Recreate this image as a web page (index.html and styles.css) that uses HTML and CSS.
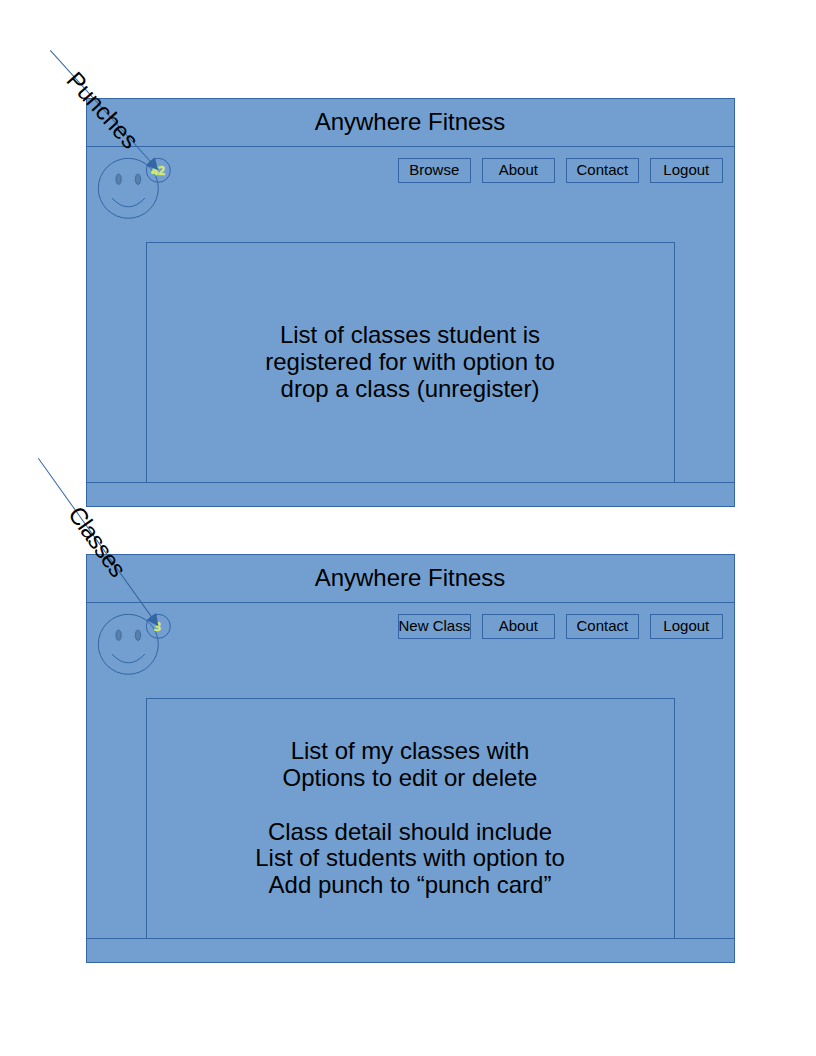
FILE: index.html
```html
<!DOCTYPE html>
<html lang="en">
<head>
<meta charset="utf-8">
<title>Anywhere Fitness</title>
<link rel="stylesheet" href="styles.css">
</head>
<body>
<main class="page">
  <section class="screen">
    <header class="header">Anywhere Fitness</header>
    <div class="body">
      <div class="toolbar">
        <svg class="avatar" width="76" height="64" viewBox="0 0 76 64">
          <circle class="outline" cx="31.3" cy="31.3" r="30"/>
          <ellipse class="eye" cx="21.6" cy="22.2" rx="2.7" ry="5.2"/>
          <ellipse class="eye" cx="41" cy="22.2" rx="2.7" ry="5.2"/>
          <path class="outline" d="M15 41.2Q31.500 58.500 47.800 41.200"/>
          <circle class="outline" cx="61.300" cy="13.300" r="12"/>
          <text class="count" x="61" y="17.700">42</text>
        </svg>
        <nav class="nav">
          <span class="button">Browse</span><span class="button">About</span><span class="button">Contact</span><span class="button">Logout</span>
        </nav>
      </div>
      <div class="panel"><p>List of classes student is<br>registered for with option to<br>drop a class (unregister)</p></div>
    </div>
    <footer class="footer"></footer>
  </section>
  <section class="screen">
    <header class="header">Anywhere Fitness</header>
    <div class="body">
      <div class="toolbar">
        <svg class="avatar" width="76" height="64" viewBox="0 0 76 64">
          <circle class="outline" cx="31.3" cy="31.3" r="30"/>
          <ellipse class="eye" cx="21.6" cy="22.2" rx="2.7" ry="5.2"/>
          <ellipse class="eye" cx="41" cy="22.2" rx="2.7" ry="5.2"/>
          <path class="outline" d="M15 41.2Q31.500 58.500 47.800 41.200"/>
          <circle class="outline" cx="61.300" cy="13.300" r="12"/>
          <text class="count" x="60.500" y="17.700">3</text>
        </svg>
        <nav class="nav">
          <span class="button">New Class</span><span class="button">About</span><span class="button">Contact</span><span class="button">Logout</span>
        </nav>
      </div>
      <div class="panel"><p>List of my classes with<br>Options to edit or delete<br><br>Class detail should include<br>List of students with option to<br>Add punch to “punch card”</p></div>
    </div>
    <footer class="footer"></footer>
  </section>
  <svg class="callouts" width="816" height="1056" viewBox="0 0 816 1056">
    <g transform="translate(50.3 50.3) rotate(48.01)">
      <path class="leader" d="M0 0H152"/>
      <path class="arrowhead" d="M161.400 0L149.400 -6V6Z"/>
      <text class="label" x="79.600" y="9.400">Punches</text>
    </g>
    <g transform="translate(38.3 458.3) rotate(54.46)">
      <path class="leader" d="M0 0H197"/>
      <path class="arrowhead" d="M206.500 0L194.500 -6V6Z"/>
      <text class="label" x="102.200" y="8.700" textLength="80">Classes</text>
    </g>
  </svg>
</main>
</body>
</html>
```
FILE: styles.css
```css
* { box-sizing: border-box; }
body {
  margin: 0;
  background: #fff;
  color: #000;
  font-family: "Liberation Sans", Arial, sans-serif;
}
.page {
  position: relative;
  width: 816px;
  height: 1056px;
  padding: 98px 81px 0 86px;
  display: flex;
  flex-direction: column;
  gap: 47px;
  overflow: hidden;
}
.screen {
  width: 649px;
  height: 409px;
  display: flex;
  flex-direction: column;
  background: #729fcf;
}
.header {
  height: 49px;
  border: 1px solid #3465a4;
  padding: 0 1px 2px 0;
  display: flex;
  align-items: center;
  justify-content: center;
  font-size: 24px;
}
.body {
  flex: 1;
  border: solid #3465a4;
  border-width: 0 1px;
  display: flex;
  flex-direction: column;
  align-items: center;
}
.toolbar {
  width: 100%;
  height: 95px;
  padding: 10px 11px 0 10px;
  display: flex;
  justify-content: space-between;
  align-items: flex-start;
}
.avatar { display: block; }
.nav {
  display: flex;
  gap: 11px;
  padding-top: 1px;
}
.button {
  width: 73px;
  height: 25px;
  border: 1px solid #3465a4;
  padding: 0 0.4px 2px 0;
  display: flex;
  align-items: center;
  justify-content: center;
  font-size: 15px;
  white-space: nowrap;
}
.panel {
  flex: 1;
  width: 529px;
  border: 1px solid #3465a4;
  border-bottom: 0;
  padding-right: 1px;
  display: flex;
  align-items: center;
  justify-content: center;
  text-align: center;
  font-size: 24px;
  line-height: 26.8px;
}
.panel p { margin: 0; }
.footer {
  height: 25px;
  border: 1px solid #3465a4;
}
.outline { fill: none; stroke: #3465a4; }
.eye { fill: #5b7fa6; stroke: #3465a4; stroke-width: 0.8; }
.count {
  font: bold 12px "Open Sans", "Noto Sans", sans-serif;
  fill: #d4ea6b;
  stroke: #d4ea6b;
  stroke-width: 0.6;
  text-anchor: middle;
}
.callouts {
  position: absolute;
  left: 0;
  top: 0;
}
.leader { fill: none; stroke: #3465a4; }
.arrowhead { fill: #3465a4; }
.label {
  font-size: 24px;
  text-anchor: middle;
}
```
